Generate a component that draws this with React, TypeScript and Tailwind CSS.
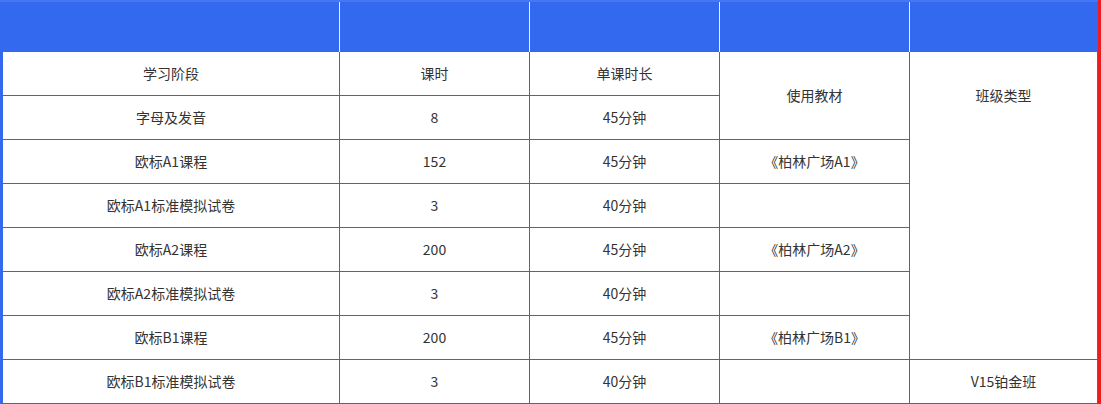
import React from "react";

const rows: [string, string, string][] = [
  ["学习阶段", "课时", "单课时长"],
  ["字母及发音", "8", "45分钟"],
  ["欧标A1课程", "152", "45分钟"],
  ["欧标A1标准模拟试卷", "3", "40分钟"],
  ["欧标A2课程", "200", "45分钟"],
  ["欧标A2标准模拟试卷", "3", "40分钟"],
  ["欧标B1课程", "200", "45分钟"],
  ["欧标B1标准模拟试卷", "3", "40分钟"],
];

const cell = "bg-white flex items-center justify-center text-[14px] text-[#333]";

export default function App() {
  return (
    <div
      className="w-[1101px] h-[404px] overflow-hidden bg-white"
      style={{ fontFamily: '"Microsoft YaHei", "Noto Sans CJK SC", "Noto Sans", sans-serif' }}
    >
      <div className="flex flex-col w-[1101px] border-r-[3px] border-[#ee1c1c]">
        {/* header */}
        <div className="flex h-[52px] bg-[#3369ef] border-t-2 border-[#4577f2]">
          <div className="w-[340px] border-r border-[#f3f1dc]" />
          <div className="w-[190px] border-r border-[#f3f1dc]" />
          <div className="w-[190px] border-r border-[#f3f1dc]" />
          <div className="w-[190px] border-r border-[#f3f1dc]" />
          <div className="flex-1" />
        </div>
        {/* body */}
        <div className="border-l-[3px] border-[#3369ef]">
          <div className="grid grid-cols-[336px_189px_189px_189px_187px] grid-rows-[repeat(8,43px)] gap-px bg-[#3366dd] pr-px pb-px">
            {rows.map((r, i) => (
              <React.Fragment key={i}>
                <div className={cell} style={{ gridColumn: 1, gridRow: i + 1 }}>{r[0]}</div>
                <div className={cell} style={{ gridColumn: 2, gridRow: i + 1 }}>{r[1]}</div>
                <div className={cell} style={{ gridColumn: 3, gridRow: i + 1 }}>{r[2]}</div>
              </React.Fragment>
            ))}
            <div className={`${cell} col-start-4 row-start-1 row-span-2`}>使用教材</div>
            <div className={`${cell} col-start-4 row-start-3`}>《柏林广场A1》</div>
            <div className={`${cell} col-start-4 row-start-4`} />
            <div className={`${cell} col-start-4 row-start-5`}>《柏林广场A2》</div>
            <div className={`${cell} col-start-4 row-start-6`} />
            <div className={`${cell} col-start-4 row-start-7`}>《柏林广场B1》</div>
            <div className={`${cell} col-start-4 row-start-8`} />
            <div className="bg-white col-start-5 row-start-1 row-span-7 flex flex-col">
              <div className="h-[87px] flex items-center justify-center text-[14px] text-[#333]">班级类型</div>
            </div>
            <div className={`${cell} col-start-5 row-start-8`}>V15铂金班</div>
          </div>
        </div>
      </div>
    </div>
  );
}
